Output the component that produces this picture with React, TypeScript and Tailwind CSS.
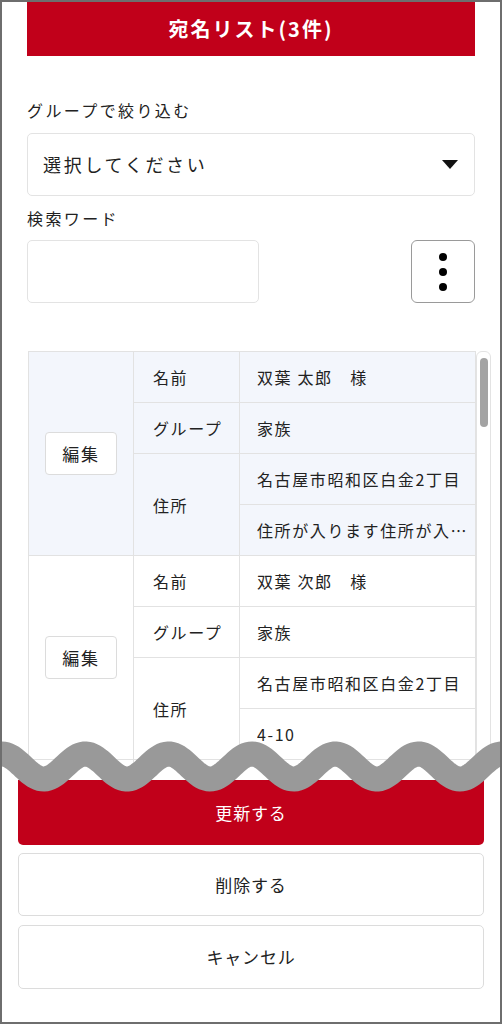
import React from "react";

type Rec = { name: string; group: string; addr1: string; addr2: string; shade: boolean };

const records: Rec[] = [
  { name: "双葉 太郎　様", group: "家族", addr1: "名古屋市昭和区白金2丁目", addr2: "住所が入ります住所が入ります住所が入ります", shade: true },
  { name: "双葉 次郎　様", group: "家族", addr1: "名古屋市昭和区白金2丁目", addr2: "4-10", shade: false },
  { name: "双葉 花子　様", group: "友人", addr1: "名古屋市昭和区白金2丁目", addr2: "4-10", shade: false },
];

function wavePath() {
  const pts: string[] = [];
  for (let x = -20; x <= 520; x += 2) {
    const y = 36.5 - 12.5 * Math.cos((2 * Math.PI * x) / 83.3);
    pts.push(`${x === -20 ? "M" : "L"}${x},${y.toFixed(2)}`);
  }
  return pts.join(" ");
}

function Record({ r }: { r: Rec }) {
  const cell = `flex items-center border-r border-b border-[#e2e2e2] ${r.shade ? "bg-[#f3f6fc]" : "bg-white"}`;
  return (
    <div className="grid grid-cols-[105px_106px_236px] grid-rows-[51px_51px_51px_51px] text-[16px] tracking-[0.1em]">
      <div className={`${cell} row-span-4 justify-center`}>
        <button className="w-[72px] h-[43px] bg-white border border-[#dcdcdc] rounded-[4px] text-[17px] tracking-[0.1em]">編集</button>
      </div>
      <div className={`${cell} pl-[19px]`}>名前</div>
      <div className={`${cell} pl-[17px]`}>{r.name}</div>
      <div className={`${cell} pl-[19px]`}>グループ</div>
      <div className={`${cell} pl-[17px]`}>{r.group}</div>
      <div className={`${cell} row-span-2 pl-[19px]`}>住所</div>
      <div className={`${cell} pl-[17px]`}>{r.addr1}</div>
      <div className={`${cell} pl-[17px] pr-[8px]`}>
        <span className="block truncate">{r.addr2}</span>
      </div>
    </div>
  );
}

export default function App() {
  return (
    <div className="relative w-[502px] h-[1024px] overflow-hidden border-2 border-[#6e6e6e] bg-white text-[#222] font-['Noto_Sans_CJK_JP','Noto_Sans',sans-serif]">
      <div className="px-[25px]">
        {/* Header */}
        <div className="h-[54px] bg-[#c1001a] flex items-center justify-center text-white text-[20px] font-bold tracking-[0.1em]">
          宛名リスト(3件)
        </div>

        {/* Group filter */}
        <div className="mt-[42px] text-[16px] leading-6 tracking-[0.15em]">グループで絞り込む</div>
        <div className="mt-[11px] h-[63px] border border-[#e3e3e3] rounded-[5px] flex items-center justify-between pl-[15px] pr-[16px] text-[18px] tracking-[0.15em]">
          <span>選択してください</span>
          <svg width="16" height="9" viewBox="0 0 16 9">
            <path d="M0 0 H16 L8 9 Z" fill="#111" />
          </svg>
        </div>

        {/* Search word */}
        <div className="mt-[10px] text-[16px] leading-6 tracking-[0.15em]">検索ワード</div>
        <div className="mt-[10px] flex justify-between">
          <input className="w-[232px] h-[63px] border border-[#e3e3e3] rounded-[5px] px-3 outline-none" />
          <button className="w-[64px] h-[63px] border border-[#9a9a9a] rounded-[6px] flex flex-col items-center justify-center gap-[7px]">
            <span className="w-2 h-2 rounded-full bg-black" />
            <span className="w-2 h-2 rounded-full bg-black" />
            <span className="w-2 h-2 rounded-full bg-black" />
          </button>
        </div>

        {/* List */}
        <div className="mt-[48px] ml-px w-[463px] h-[416px] flex overflow-hidden">
          <div className="w-[448px] border-l border-t border-[#e2e2e2]">
            {records.map((r, i) => (
              <Record key={i} r={r} />
            ))}
          </div>
          <div className="w-[15px] h-[440px] border border-[#e3e3e3] rounded-[6px] flex justify-center pt-[6px]">
            <div className="w-[8px] h-[69px] bg-[#a3a3a3] rounded-full" />
          </div>
        </div>
      </div>

      {/* Actions */}
      <div className="px-[16px] pt-[13px]">
        <button className="w-full h-[65px] bg-[#c1001a] text-white text-[17px] tracking-[0.05em] rounded-b-[5px]">更新する</button>
        <button className="mt-[8px] w-full h-[63px] bg-white border border-[#dcdcdc] rounded-[5px] text-[17px] tracking-[0.05em]">削除する</button>
        <button className="mt-[9px] w-full h-[64px] bg-white border border-[#dcdcdc] rounded-[5px] text-[17px] tracking-[0.05em]">キャンセル</button>
      </div>

      {/* Cut line */}
      <svg className="absolute left-0 top-[728px]" width="498" height="76" viewBox="0 0 498 76">
        <path d={wavePath()} fill="none" stroke="#999999" strokeWidth="25" />
      </svg>
    </div>
  );
}
